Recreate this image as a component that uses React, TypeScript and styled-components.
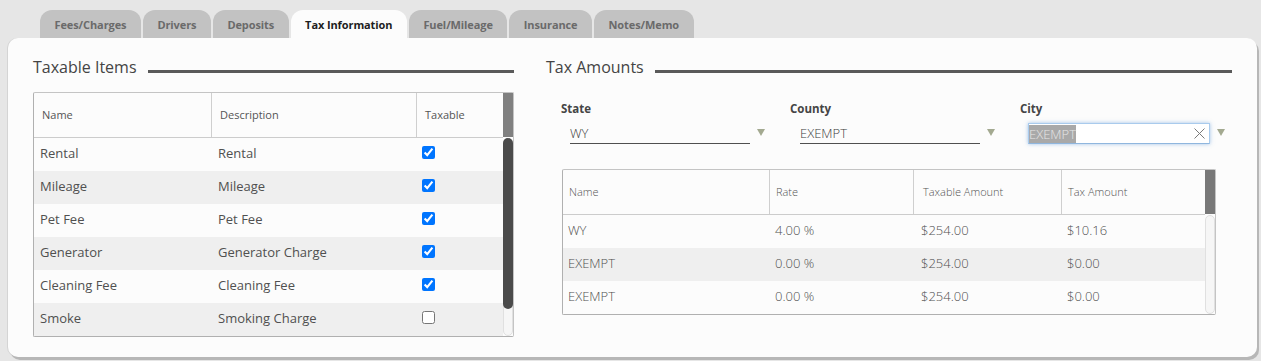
import styled, { createGlobalStyle } from 'styled-components'

interface TaxableItem {
  name: string
  description: string
  taxable: boolean
}

interface TaxAmount {
  name: string
  rate: string
  taxableAmount: string
  taxAmount: string
}

const tabs = [
  'Fees/Charges',
  'Drivers',
  'Deposits',
  'Tax Information',
  'Fuel/Mileage',
  'Insurance',
  'Notes/Memo',
]

const taxableItems: TaxableItem[] = [
  { name: 'Rental', description: 'Rental', taxable: true },
  { name: 'Mileage', description: 'Mileage', taxable: true },
  { name: 'Pet Fee', description: 'Pet Fee', taxable: true },
  { name: 'Generator', description: 'Generator Charge', taxable: true },
  { name: 'Cleaning Fee', description: 'Cleaning Fee', taxable: true },
  { name: 'Smoke', description: 'Smoking Charge', taxable: false },
]

const taxAmounts: TaxAmount[] = [
  { name: 'WY', rate: '4.00 %', taxableAmount: '$254.00', taxAmount: '$10.16' },
  { name: 'EXEMPT', rate: '0.00 %', taxableAmount: '$254.00', taxAmount: '$0.00' },
  { name: 'EXEMPT', rate: '0.00 %', taxableAmount: '$254.00', taxAmount: '$0.00' },
]

const ITEM_COLUMNS = '178px 205px 1fr'
const AMOUNT_COLUMNS = '207px 144px 148px 1fr'

// Thin cross used by the clearable city combo.
const ClearIcon = () => (
  <svg width="11" height="11" viewBox="0 0 11 11">
    <path d="M0.5 0.5 L10.5 10.5 M10.5 0.5 L0.5 10.5" stroke="#7a7a7a" strokeWidth="1" fill="none" />
  </svg>
)

export default function App() {
  return (
    <>
      <GlobalStyle />
      <Page>
        <TabBar>
          {tabs.map((tab) => (
            <Tab key={tab} $active={tab === 'Tax Information'}>
              {tab}
            </Tab>
          ))}
        </TabBar>

        <Panel>
          <Column>
            <Heading>
              <HeadingTitle>Taxable Items</HeadingTitle>
              <HeadingRule />
            </Heading>

            <TableFrame $top={13}>
              <TableBody>
                <HeaderRow $columns={ITEM_COLUMNS}>
                  <HeaderCell>Name</HeaderCell>
                  <HeaderCell>Description</HeaderCell>
                  <HeaderCell $last>Taxable</HeaderCell>
                </HeaderRow>
                {taxableItems.map((item, index) => (
                  <Row key={item.name} $columns={ITEM_COLUMNS} $striped={index % 2 === 1}>
                    <Cell>{item.name}</Cell>
                    <Cell>{item.description}</Cell>
                    <CheckCell>
                      <Checkbox type="checkbox" checked={item.taxable} readOnly />
                    </CheckCell>
                  </Row>
                ))}
              </TableBody>
              <Scrollbar>
                <ScrollHead />
                <ScrollTrack>
                  <ScrollThumb $height={171} />
                </ScrollTrack>
              </Scrollbar>
            </TableFrame>
          </Column>

          <Column>
            <Heading>
              <HeadingTitle>Tax Amounts</HeadingTitle>
              <HeadingRule />
            </Heading>

            <Fields>
              <Field $width={229}>
                <FieldLabel>State</FieldLabel>
                <InputRow $indent={9}>
                  <Select>WY</Select>
                  <Arrow />
                </InputRow>
              </Field>
              <Field $width={230}>
                <FieldLabel>County</FieldLabel>
                <InputRow $indent={10}>
                  <Select>EXEMPT</Select>
                  <Arrow />
                </InputRow>
              </Field>
              <Field>
                <FieldLabel>City</FieldLabel>
                <InputRow $indent={8}>
                  <ComboBox>
                    <Selected>EXEMPT</Selected>
                    <ClearIcon />
                  </ComboBox>
                  <Arrow />
                </InputRow>
              </Field>
            </Fields>

            <AmountsFrame>
              <TableBody>
                <HeaderRow $columns={AMOUNT_COLUMNS}>
                  <HeaderCell $light $pad={6}>Name</HeaderCell>
                  <HeaderCell $light $pad={6}>Rate</HeaderCell>
                  <HeaderCell $light $pad={9}>Taxable Amount</HeaderCell>
                  <HeaderCell $light $pad={6} $last>Tax Amount</HeaderCell>
                </HeaderRow>
                {taxAmounts.map((amount, index) => (
                  <Row key={index} $columns={AMOUNT_COLUMNS} $striped={index % 2 === 1}>
                    <Cell $light $pad={5}>{amount.name}</Cell>
                    <Cell $light $pad={5}>{amount.rate}</Cell>
                    <Cell $light $pad={7}>{amount.taxableAmount}</Cell>
                    <Cell $light $pad={5}>{amount.taxAmount}</Cell>
                  </Row>
                ))}
              </TableBody>
              <Scrollbar>
                <ScrollHead $shade="#787878" />
                <ScrollTrack />
              </Scrollbar>
            </AmountsFrame>
          </Column>
        </Panel>
      </Page>
    </>
  )
}

const GlobalStyle = createGlobalStyle`
  body {
    margin: 0;
    background: #e6e6e6;
    font-family: 'Open Sans', 'Liberation Sans', sans-serif;
  }
`

const Page = styled.div`
  padding: 10px 4px 4px 8px;
`

const TabBar = styled.nav`
  display: flex;
  gap: 2px;
  height: 28px;
  padding-left: 32px;
`

const Tab = styled.div<{ $active?: boolean }>`
  display: flex;
  align-items: center;
  padding: 0 14.5px;
  border-radius: 12px 12px 0 0;
  font-size: 11px;
  font-weight: 700;
  letter-spacing: -0.1px;
  color: ${({ $active }) => ($active ? '#1e1e1e' : '#6a6a6a')};
  background: ${({ $active }) => ($active ? '#fcfcfc' : '#c2c2c2')};
`

const Panel = styled.section`
  display: grid;
  grid-template-columns: 481px 686px;
  gap: 32px;
  height: 319px;
  box-sizing: border-box;
  padding: 17px 25px 0;
  border-radius: 10px;
  background: #fcfcfc;
  box-shadow: 2px 3px 0 #b7b7b7, -1px 0 0 #d4d4d4;
`

const Column = styled.div`
  display: flex;
  flex-direction: column;
  min-width: 0;
`

const Heading = styled.div`
  display: flex;
  align-items: flex-end;
  gap: 11px;
  height: 24px;
`

const HeadingTitle = styled.h2`
  margin: 0;
  font-size: 16px;
  font-weight: 400;
  line-height: 24px;
  color: #444;
`

const HeadingRule = styled.div`
  flex: 1;
  height: 3px;
  margin-bottom: 6px;
  background: #5a5a5a;
`

const TableFrame = styled.div<{ $top: number }>`
  display: flex;
  margin-top: ${({ $top }) => $top}px;
  border: 1px solid #c4c4c4;
  border-left-color: #b0b0b0;
  border-bottom-color: #b0b0b0;
  border-radius: 2px;
  background: #fcfcfc;
`

const AmountsFrame = styled(TableFrame).attrs({ $top: 25 })`
  width: 654px;
  box-sizing: border-box;
  margin-left: 16px;
`

const TableBody = styled.div`
  flex: 1;
  display: flex;
  flex-direction: column;
`

const HeaderRow = styled.div<{ $columns: string }>`
  display: grid;
  grid-template-columns: ${({ $columns }) => $columns};
  height: 44px;
  border-bottom: 1px solid #cccccc;
`

const HeaderCell = styled.div<{ $last?: boolean; $light?: boolean; $pad?: number }>`
  display: flex;
  align-items: center;
  padding: 0 0 2px ${({ $pad }) => $pad ?? 8}px;
  border-right: ${({ $last }) => ($last ? 'none' : '1px solid #cfcfcf')};
  font-size: 11px;
  font-weight: ${({ $light }) => ($light ? 300 : 400)};
  color: #555;
`

const Row = styled.div<{ $columns: string; $striped: boolean }>`
  display: grid;
  grid-template-columns: ${({ $columns }) => $columns};
  height: 33px;
  background: ${({ $striped }) => ($striped ? '#efefef' : '#fcfcfc')};
`

const Cell = styled.div<{ $light?: boolean; $pad?: number }>`
  display: flex;
  align-items: center;
  padding: 0 0 3px ${({ $pad }) => $pad ?? 6}px;
  font-size: 13px;
  font-weight: ${({ $light }) => ($light ? 300 : 400)};
  color: #505050;
  white-space: nowrap;
`

const CheckCell = styled.div`
  padding: 8px 0 0 5px;
`

const Checkbox = styled.input`
  display: block;
  width: 13px;
  height: 13px;
  margin: 0;
`

const Scrollbar = styled.div`
  display: flex;
  flex-direction: column;
  width: 10px;
`

const ScrollHead = styled.div<{ $shade?: string }>`
  height: 44px;
  background: ${({ $shade }) => $shade ?? '#808080'};
`

const ScrollTrack = styled.div`
  flex: 1;
  margin-top: 1px;
  border: 1px solid #e0e0e0;
  border-radius: 5px;
  background: #f6f6f6;
`

const ScrollThumb = styled.div<{ $height: number }>`
  height: ${({ $height }) => $height}px;
  margin: -1px;
  border-radius: 5px;
  background: #4b4b4b;
`

const Fields = styled.div`
  display: flex;
  margin-top: 22px;
  padding-left: 15px;
`

const Field = styled.div<{ $width?: number }>`
  display: flex;
  flex: none;
  flex-direction: column;
  width: ${({ $width }) => ($width ? `${$width}px` : 'auto')};
`

const FieldLabel = styled.label`
  font-size: 11.5px;
  font-weight: 700;
  line-height: 16px;
  color: #454545;
`

const InputRow = styled.div<{ $indent: number }>`
  display: flex;
  align-items: center;
  gap: 7px;
  margin-top: 6px;
  padding-left: ${({ $indent }) => $indent}px;
`

const Select = styled.div`
  display: flex;
  align-items: center;
  width: 180px;
  height: 20px;
  border-bottom: 1px solid #505050;
  font-size: 13px;
  font-weight: 300;
  color: #3c3c3c;
`

const ComboBox = styled.div`
  display: flex;
  align-items: center;
  justify-content: space-between;
  width: 176px;
  height: 19px;
  box-sizing: content-box;
  padding-right: 4px;
  border: 1px solid #a9cbed;
  border-bottom-color: #8fb6de;
  background: #ffffff;
  box-shadow: 0 0 4px rgba(90, 150, 215, 0.55);
`

const Selected = styled.span`
  display: flex;
  align-items: center;
  height: 18px;
  background: #a9a9a9;
  font-size: 13px;
  font-weight: 300;
  color: #e6e6e6;
`

const Arrow = styled.span`
  width: 0;
  height: 0;
  margin-top: -3px;
  border-left: 4px solid transparent;
  border-right: 4px solid transparent;
  border-top: 7px solid #a3a990;
`
